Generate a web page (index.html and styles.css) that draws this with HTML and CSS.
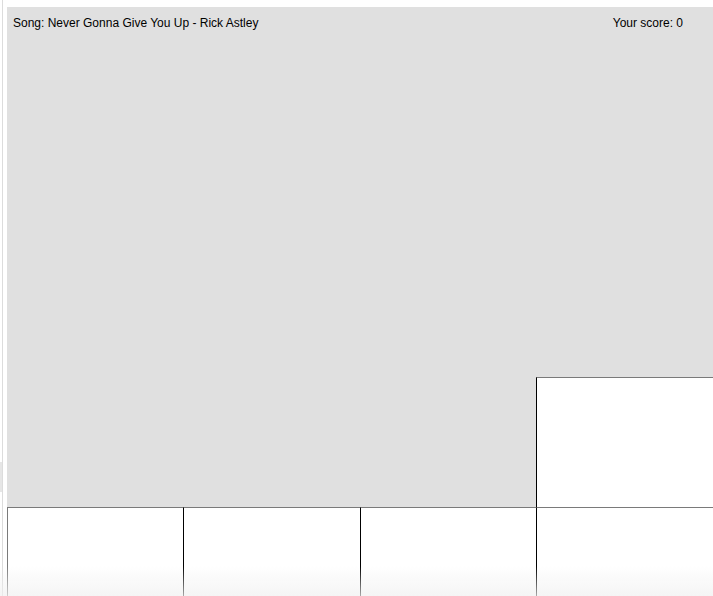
FILE: index.html
```html
<!DOCTYPE html>
<html lang="en">
<head>
  <meta charset="UTF-8">
  <meta name="viewport" content="width=device-width, initial-scale=1.0">
  <title>Piano Tiles</title>
  <link rel="stylesheet" href="styles.css">
</head>
<body>

<div id="page">
  <div class="gutter">
    <div class="gutter-thumb"></div>
  </div>

  <div id="game">
    <div class="board">
      <div class="info">
        <span class="song">Song: Never Gonna Give You Up - Rick Astley</span>
        <span class="score">Your score: 0</span>
      </div>
      <div class="tile falling"></div>
    </div>

    <div class="keys">
      <div class="tile key"></div>
      <div class="tile key"></div>
      <div class="tile key"></div>
      <div class="tile key"></div>
    </div>
  </div>
</div>

<div class="fade"></div>

</body>
</html>
```

FILE: styles.css
```css
body {
  font-family: "Liberation Sans", Arial, sans-serif;
  background-color: #fff;
  margin: 0;
  padding: 0;
  height: 596px;
  overflow: hidden;
}

#page {
  display: flex;
}

.gutter {
  width: 4px;
  margin-left: 2px;
  margin-right: 1px;
  height: 596px;
  border-left: 1px solid #dcdcdc;
}

.gutter-thumb {
  width: 2px;
  height: 30px;
  margin-left: -3px;
  margin-top: 462px;
  background-color: #e6e6e6;
}

#game {
  width: 706px;
  flex-shrink: 0;
  padding-top: 7px;
}

.board {
  background-color: #e0e0e0;
  height: 500px;
  display: grid;
  grid-template-columns: 176px 177px 176px 177px;
  grid-template-rows: auto 1fr;
}

.info {
  grid-column: 1 / 5;
  grid-row: 1;
  display: flex;
  justify-content: space-between;
  font-size: 12px;
  color: #000;
  padding: 9px 30px 0 6px;
}

.tile {
  background-color: #fff;
  border-left: 1px solid #000;
  border-top: 1px solid #7a7a7a;
  box-sizing: border-box;
  height: 130px;
}

.falling {
  grid-column: 4;
  grid-row: 2;
  align-self: end;
}

.keys {
  display: grid;
  grid-template-columns: 176px 177px 176px 177px;
}

.key:first-child {
  border-left-color: #7a7a7a;
}

.fade {
  position: fixed;
  left: 0;
  right: 0;
  bottom: 0;
  height: 30px;
  background: linear-gradient(rgba(240, 240, 240, 0), rgba(240, 240, 240, 0.7));
  pointer-events: none;
}
```
